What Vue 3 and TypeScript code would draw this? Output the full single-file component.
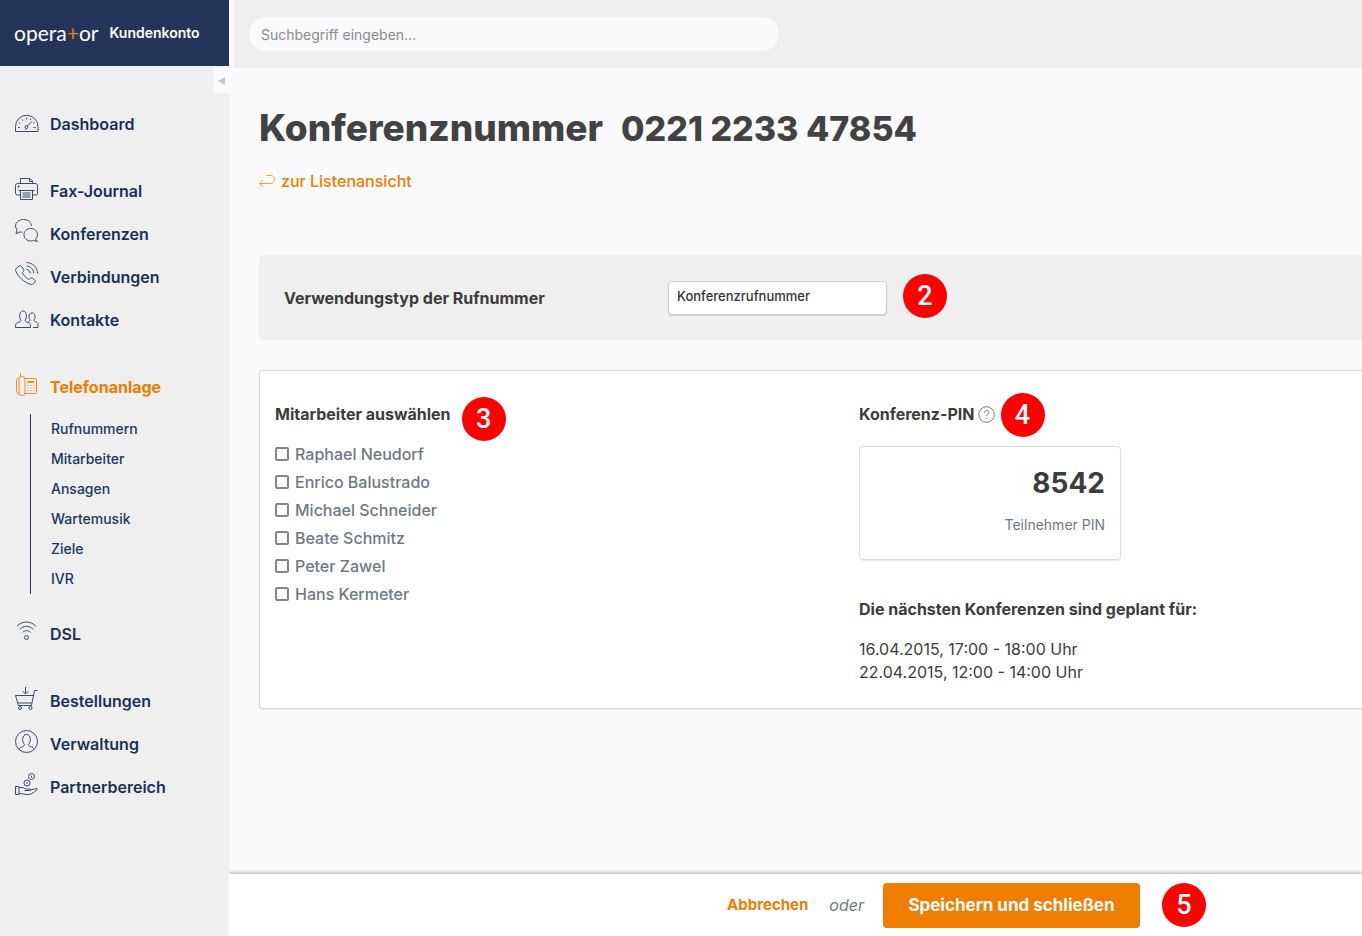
<script setup lang="ts">
import { ref } from 'vue'

interface NavItem {
  label: string
  icon: string
  active?: boolean
  children?: string[]
}

const navGroups: NavItem[][] = [
  [{ label: 'Dashboard', icon: 'gauge' }],
  [
    { label: 'Fax-Journal', icon: 'printer' },
    { label: 'Konferenzen', icon: 'chat' },
    { label: 'Verbindungen', icon: 'call' },
    { label: 'Kontakte', icon: 'people' },
  ],
  [
    {
      label: 'Telefonanlage',
      icon: 'phone',
      active: true,
      children: ['Rufnummern', 'Mitarbeiter', 'Ansagen', 'Wartemusik', 'Ziele', 'IVR'],
    },
    { label: 'DSL', icon: 'wifi' },
  ],
  [
    { label: 'Bestellungen', icon: 'cart' },
    { label: 'Verwaltung', icon: 'user' },
    { label: 'Partnerbereich', icon: 'coins' },
  ],
]

const members = [
  'Raphael Neudorf',
  'Enrico Balustrado',
  'Michael Schneider',
  'Beate Schmitz',
  'Peter Zawel',
  'Hans Kermeter',
]

const selected = ref<string[]>([])
const search = ref('')
const usage = ref('Konferenzrufnummer')
const dates = ['16.04.2015, 17:00 - 18:00 Uhr', '22.04.2015, 12:00 - 14:00 Uhr']
</script>

<template>
  <div class="app">
    <aside class="sidebar">
      <a class="brand" href="#">
        <span class="logo">opera<span class="plus">+</span>or</span>
        <span class="account">Kundenkonto</span>
      </a>
      <button class="collapse" type="button" aria-label="Menü einklappen">
        <svg width="7" height="8" viewBox="0 0 7 8"><path d="M7 0v8L0 4z" fill="#c4c4c4" /></svg>
      </button>

      <nav>
        <ul v-for="(group, g) in navGroups" :key="g" class="group">
          <li v-for="item in group" :key="item.label">
            <a class="item" :class="{ active: item.active }" href="#">
              <svg class="icon" viewBox="0 0 25 25" width="25" height="25" aria-hidden="true">
                <g v-if="item.icon === 'gauge'">
                  <path d="M.5 22.500V17.500a11.200 11.200 0 0 1 22.500 0v5z" />
                  <path d="M3 18.500h2M18.500 18.500h2M4 13.500l1.500.9M6.800 10.300l1 1.500M11.700 8.500v2M16 9.500l-.7 1.500M19.500 13.500l-1.400.9" />
                  <circle cx="11.500" cy="18" r="1.500" />
                  <path d="M12.600 16.800l4.400-4.500M11 19.500l-1 1.300" />
                </g>
                <g v-else-if="item.icon === 'printer'">
                  <path d="M5.500 7.500V2.500h9.500l2.500 2.500v2.500M14.500 2.500v3h3" />
                  <path d="M5.500 19H2.500a2 2 0 0 1-2-2V9.500a2 2 0 0 1 2-2h18a2 2 0 0 1 2 2V17a2 2 0 0 1-2 2h-3" />
                  <path d="M3.500 14.500h16M5.500 14.500v9h12v-9M7.500 17h8M7.500 19h8M7.500 21h8" />
                  <circle cx="3.500" cy="10.500" r=".7" />
                </g>
                <g v-else-if="item.icon === 'chat'">
                  <path d="M7.500 13.300a10 10 0 0 1-2.300-.5L1 14.800l1-4A6.500 6.500 0 0 1 .5 7C.5 3.400 4 .5 8.500.5c4.300 0 7.700 2.600 8 6.500" />
                  <path d="M20.500 20.200a6.300 6.300 0 0 0 2-4.400c0-3.500-3-6.300-6.800-6.300S9 12.300 9 15.800s3 6.200 6.700 6.200c1 0 2-.2 2.800-.5l4 1z" />
                </g>
                <g v-else-if="item.icon === 'call'">
                  <path d="M2.500 5.300 4.300 4c.8-.5 1.700-.3 2.300.5l2 3c.5.800.3 1.700-.4 2.300-.8.700-.9 1.300-.2 2.300 1.400 2 2.800 3.400 4.800 4.800.9.600 1.500.5 2.200-.3.600-.7 1.500-.9 2.300-.4l2.200 1.600c.8.600.9 1.500.4 2.300-1.200 1.800-3 2.800-5.200 2C8.500 20 3.300 14.500 1 9.700.1 7.700.8 6.300 2.500 5.300z" />
                  <path d="M11.500 7.500c2.200.3 3.500 1.700 3.800 4M11.500 4c4 .2 7 3.200 7.300 7.300M11.500.5c6.200.2 11 5 11.200 11.200" />
                </g>
                <g v-else-if="item.icon === 'people'">
                  <path d="M.5 22.500c0-4 .5-4.500 3.500-5.400 1.300-.4 1.900-.8 1.900-2-1.700-1.800-2.300-8.600 2-9.200 4.500.3 4.100 7.300 2.200 9.200 0 1.200.6 1.600 1.900 2 3 .9 3.500 1.400 3.500 5.400z" />
                  <path d="M13.500 16.500c1.200-.4 1.600-.8 1.600-1.600-1.600-1.500-1.800-6.600 2-7 3.700.2 3.400 5.600 1.900 7 0 1 .5 1.400 1.500 1.800 2.200.7 2.500 1.300 2.500 5.800h-5" />
                </g>
                <g v-else-if="item.icon === 'phone'">
                  <path d="M5.500 4.500V1M4 6C2 6.200 1.500 7 1.500 8.500v10c0 2 .5 2.800 2.500 3.300" />
                  <rect x="4" y="4.500" width="6" height="19" rx="2.500" />
                  <path d="M10 6.500h10.500a1 1 0 0 1 1 1v13a1 1 0 0 1-1 1H10" />
                  <path d="M12.500 9.500h6.500M12.500 10.500h6.500M13 13v1M16 13v1M19 13v1M13 15.500v1M16 15.500v1M19 15.500v1M13 18v1M16 18v1M19 18v1" />
                </g>
                <g v-else-if="item.icon === 'wifi'">
                  <path d="M2 7.300c5.200-5.700 13.800-5.700 19 0M4.800 10.300c3.700-4 9.700-4 13.400 0M7.600 13.300c2.200-2.200 5.600-2.200 7.800 0" />
                  <circle cx="11.500" cy="18.500" r="2" />
                </g>
                <g v-else-if="item.icon === 'cart'">
                  <path d="M10.500 1v7M7.500 5l3 3 3-3" />
                  <path d="M22.500 4.500h-3L16.500 19.500H3.500M.5 9.500h18M.5 9.500l3 10M2.800 17h14" />
                  <circle cx="5" cy="22" r="1.500" />
                  <circle cx="15.500" cy="22" r="1.500" />
                </g>
                <g v-else-if="item.icon === 'user'">
                  <circle cx="11.500" cy="12.500" r="11" />
                  <path d="M4 20.500c.6-1.900 1.700-2.300 3.500-2.900 1.400-.4 1.900-.9 1.900-2.200-2.400-2.500-2.700-9.700 2.100-9.900 4.800.2 4.500 7.400 2.100 9.900 0 1.300.5 1.800 1.900 2.200 1.800.6 2.900 1 3.500 2.900" />
                </g>
                <g v-else>
                  <circle cx="16.500" cy="4.500" r="3" />
                  <circle cx="12" cy="11" r="3" />
                  <path d="M16.500 3.500v2M12 10v2M.5 14.500H4v8H.5z" />
                  <path d="M4 15.500h3c2 0 2.500 1.500 5 1.500h3c1 0 1 1.500 0 1.500H9.500M16 18l5-1.500c1-.2 2 .5 1 1.200-3 2.300-5 4.800-8.500 4.800-4 0-6-.8-9.500-1" />
                </g>
              </svg>
              <span>{{ item.label }}</span>
            </a>
            <ul v-if="item.children" class="sub">
              <li v-for="child in item.children" :key="child"><a href="#">{{ child }}</a></li>
            </ul>
          </li>
        </ul>
      </nav>
    </aside>

    <div class="page">
      <header class="topbar">
        <input v-model="search" class="search" type="search" placeholder="Suchbegriff eingeben..." aria-label="Suchbegriff" />
      </header>

      <main class="content">
        <h1><span>Konferenznummer</span><span class="number">0221 2233 47854</span></h1>
        <a class="back" href="#">
          <svg width="16" height="14" viewBox="0 0 16 14" aria-hidden="true">
            <path d="M7 1.500h5c4.500 0 4.500 8 0 8H1M4 6L.7 9.500 4 13" />
          </svg>
          <span>zur Listenansicht</span>
        </a>

        <section class="usage">
          <label for="usage">Verwendungstyp der Rufnummer</label>
          <div class="usage-field">
            <select id="usage" v-model="usage">
              <option>Konferenzrufnummer</option>
            </select>
            <span class="badge">2</span>
          </div>
        </section>

        <section class="card">
          <div>
            <h2>Mitarbeiter auswählen<span class="badge over low">3</span></h2>
            <ul class="members">
              <li v-for="name in members" :key="name">
                <label><input v-model="selected" type="checkbox" :value="name" />{{ name }}</label>
              </li>
            </ul>
          </div>
          <div>
            <h2>
              Konferenz-PIN
              <svg class="help" width="17" height="17" viewBox="0 0 17 17" aria-hidden="true">
                <circle cx="8.500" cy="8.500" r="7.800" />
                <path d="M6.300 6.800c0-3 4.500-3 4.500-.2 0 1.600-2.200 1.700-2.200 3.600M8.600 11.800v1.200" />
              </svg>
              <span class="badge over">4</span>
            </h2>
            <div class="pin">
              <strong>8542</strong>
              <span>Teilnehmer PIN</span>
            </div>
            <h2 class="planned">Die nächsten Konferenzen sind geplant für:</h2>
            <p v-for="date in dates" :key="date" class="date">{{ date }}</p>
          </div>
        </section>
      </main>

      <footer class="actions">
        <a class="cancel" href="#">Abbrechen</a>
        <em>oder</em>
        <button class="save" type="button">Speichern und schließen</button>
        <span class="badge">5</span>
      </footer>
    </div>
  </div>
</template>

<style>
body {
  margin: 0;
}
</style>

<style scoped>
* {
  box-sizing: border-box;
}
.app {
  display: flex;
  min-height: 100vh;
  background: #fafafc;
  color: #3c3c3c;
  font: 16px/24px Inter, "Liberation Sans", sans-serif;
  overflow: hidden;
}
a {
  text-decoration: none;
}
ul,
h1,
h2,
p {
  margin: 0;
  padding: 0;
  list-style: none;
}

/* Sidebar */
.sidebar {
  position: relative;
  flex: none;
  width: 229px;
  background: #efefef;
}
.brand {
  display: flex;
  align-items: center;
  gap: 11px;
  height: 66px;
  padding-left: 14px;
  background: #23365a;
  color: #fff;
}
.logo {
  font: 400 21px/24px Lato, sans-serif;
}
.plus {
  color: #ef7d00;
}
.account {
  font-size: 14px;
  font-weight: 600;
}
.collapse {
  position: absolute;
  top: 67px;
  right: 0;
  display: flex;
  align-items: center;
  justify-content: center;
  width: 16px;
  height: 26px;
  padding: 2px 0 0;
  border: 0;
  background: #fafafc;
}
nav {
  padding-top: 36px;
}
.group + .group {
  margin-top: 24px;
}
.item {
  display: flex;
  align-items: center;
  gap: 10px;
  height: 43px;
  padding-left: 15px;
  color: #1c2f55;
  font-weight: 600;
}
.item.active {
  color: #ef7d00;
  font-weight: 700;
}
.icon {
  margin-bottom: 4px;
  fill: none;
  stroke: currentColor;
  stroke-width: 1;
  stroke-linejoin: round;
  opacity: 0.85;
}
.sub {
  margin: 6px 0 18px 30px;
  padding-left: 20px;
  border-left: 1px solid #23365a;
}
.sub a {
  display: block;
  color: #23365a;
  font-size: 14px;
  font-weight: 500;
  line-height: 30px;
}

/* Page */
.page {
  flex: 1;
  min-width: 0;
  display: flex;
  flex-direction: column;
}
.topbar {
  display: flex;
  align-items: center;
  height: 68px;
  margin-left: 5px;
  padding: 0 15px;
  background: #efefef;
}
.search {
  width: 530px;
  max-width: 100%;
  height: 34px;
  padding: 0 12px;
  border: 0;
  border-radius: 17px;
  background: #fafafc;
  font: 14px Inter, sans-serif;
}
.search::placeholder {
  color: #8a8a8a;
}
.content {
  flex: 1;
  padding: 36px 0 36px 30px;
}
h1 {
  display: flex;
  align-items: baseline;
  gap: 18px;
  height: 48px;
  color: #424242;
  font-size: 37px;
  font-weight: 800;
  line-height: 48px;
}
.number {
  font-size: 34px;
}
.back {
  display: inline-flex;
  align-items: center;
  gap: 6px;
  margin-top: 17px;
  color: #ef7d00;
  font-weight: 500;
}
.back svg {
  fill: none;
  stroke: #f3a04a;
}
.usage {
  display: grid;
  grid-template-columns: 384fr 694fr;
  align-items: center;
  height: 85px;
  margin-top: 61px;
  padding-left: 25px;
  border-radius: 4px 0 0 4px;
  background: #efefef;
}
.usage label {
  font-weight: 700;
}
.usage-field {
  display: flex;
  align-items: center;
  gap: 16px;
}
.usage-field .badge {
  margin-bottom: 4px;
}
select {
  appearance: none;
  width: 219px;
  height: 34px;
  padding: 0 8px 3px;
  border: 1px solid #d0d0d0;
  border-radius: 4px;
  background: #fff;
  box-shadow: 0 1px 1px #ccc;
  color: #333;
  font: 500 13px Inter, sans-serif;
}
.badge {
  display: inline-flex;
  flex: none;
  align-items: center;
  justify-content: center;
  width: 44px;
  height: 44px;
  border-radius: 50%;
  background: #f00;
  color: #fff;
  font: 500 27px/44px Roboto, sans-serif;
}
.badge.over {
  position: absolute;
  left: 100%;
  top: -9px;
  margin-left: 6px;
}
.badge.low {
  top: -5px;
  margin-left: 11px;
}
.card {
  display: grid;
  grid-template-columns: 584fr 503fr;
  margin-top: 30px;
  padding: 31px 0 24px 15px;
  border: 1px solid #d9d9dc;
  border-right: 0;
  border-radius: 4px 0 0 4px;
  background: #fff;
  box-shadow: 0 1px 1px #e6e6e8;
}
h2 {
  position: relative;
  display: flex;
  align-items: center;
  gap: 3px;
  width: fit-content;
  font-size: 16px;
  font-weight: 700;
  line-height: 24px;
}
.help {
  fill: none;
  stroke: #777;
}
.members {
  margin-top: 14px;
}
.members label {
  display: flex;
  align-items: center;
  gap: 6px;
  height: 28px;
  color: #6f7982;
  font-weight: 500;
}
.members input {
  appearance: none;
  width: 14px;
  height: 14px;
  margin: 0;
  border: 2px solid #858291;
  border-radius: 2px;
  background: #fff;
}
.members input:checked {
  background: #858291;
}
.pin {
  display: flex;
  flex-direction: column;
  width: 262px;
  height: 114px;
  margin-top: 20px;
  padding: 18px 15px;
  border: 1px solid #dcdcde;
  border-radius: 4px;
  box-shadow: 0 1px 1px #ececee;
  text-align: right;
}
.pin strong {
  font-size: 28px;
  line-height: 36px;
}
.pin span {
  margin-top: 12px;
  color: #6f7982;
  font-size: 14px;
}
.planned {
  margin: 37px 0 17px;
}
.date {
  line-height: 23px;
}
.actions {
  display: flex;
  align-items: center;
  justify-content: flex-end;
  height: 62px;
  padding-right: 156px;
  background: #fff;
  box-shadow: 0 -1px 4px rgba(0, 0, 0, 0.35);
}
.cancel {
  color: #ef7d00;
  font-size: 15px;
  font-weight: 700;
}
.actions em {
  margin: 0 19px 0 21px;
  color: #6f7982;
}
.save {
  width: 257px;
  height: 45px;
  margin-right: 22px;
  border: 0;
  border-radius: 4px;
  background: #ef7d00;
  color: #fff;
  font: 700 17px Inter, sans-serif;
}
</style>
